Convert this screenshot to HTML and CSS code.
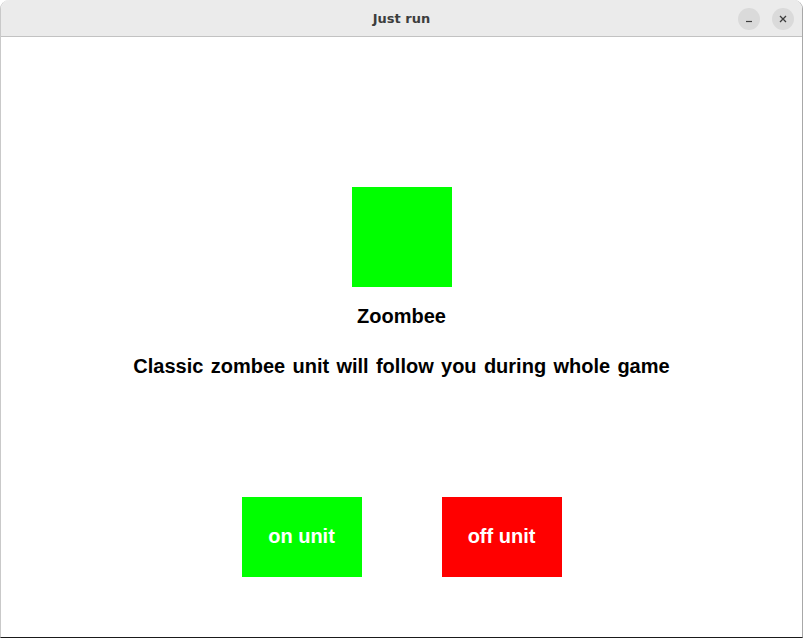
FILE: index.html
```html
<!DOCTYPE html>
<html>
<head>
<meta charset="utf-8">
<link rel="stylesheet" href="styles.css">
</head>
<body>
<div class="window">
  <div class="titlebar">
    <span class="title">Just run</span>
    <div class="controls">
      <span class="ctrl"><svg width="10" height="10" viewBox="0 0 10 10"><path d="M2 7.5h6" stroke="#3d3d3d" stroke-width="1.2"/></svg></span>
      <span class="ctrl"><svg width="10" height="10" viewBox="0 0 10 10"><path d="M2 2l6 6M8 2l-6 6" stroke="#3d3d3d" stroke-width="1.3"/></svg></span>
    </div>
  </div>
  <div class="content">
    <div class="unit-icon"></div>
    <div class="name">Zoombee</div>
    <div class="desc">Classic zombee unit will follow you during whole game</div>
    <div class="buttons">
      <div class="btn on">on unit</div>
      <div class="btn off">off unit</div>
    </div>
  </div>
  <div class="desk-strip"></div>
</div>
</body>
</html>
```
FILE: styles.css
```css
html, body {
  margin: 0;
  padding: 0;
  background: #ffffff;
}
.window {
  position: relative;
  width: 803px;
  height: 638px;
  box-sizing: border-box;
  border-left: 1px solid #c9c9c9;
  border-right: 1px solid #a8a8a8;
  border-bottom: 1px solid #1a1a1a;
  border-radius: 9px 9px 0 0;
  overflow: hidden;
  background: #ffffff;
  display: flex;
  flex-direction: column;
}
.titlebar {
  height: 36px;
  flex: none;
  background: #ebebeb;
  border-bottom: 1px solid #c2c2c2;
  display: flex;
  align-items: center;
  justify-content: center;
  position: relative;
}
.title {
  font-family: "DejaVu Sans", sans-serif;
  font-weight: bold;
  font-size: 13px;
  color: #3d3d3d;
  margin-top: 1px;
}
.controls {
  position: absolute;
  right: 8px;
  top: 8px;
  display: flex;
  gap: 12px;
}
.ctrl {
  width: 22px;
  height: 22px;
  border-radius: 50%;
  background: #dadada;
  display: flex;
  align-items: center;
  justify-content: center;
}
.content {
  flex: 1;
  display: flex;
  flex-direction: column;
  align-items: center;
  padding-top: 150px;
  font-family: "Liberation Sans", Arial, sans-serif;
  font-weight: bold;
  font-size: 20px;
  color: #000000;
}
.unit-icon {
  width: 100px;
  height: 100px;
  background: #00ff00;
}
.name {
  margin-top: 18px;
  line-height: 23px;
}
.desc {
  margin-top: 27px;
  line-height: 23px;
  word-spacing: 1.75px;
}
.buttons {
  margin-top: 119px;
  display: flex;
  gap: 80px;
}
.btn {
  width: 120px;
  height: 80px;
  box-sizing: border-box;
  padding-bottom: 2px;
  display: flex;
  align-items: center;
  justify-content: center;
  color: #ffffff;
}
.btn.on { background: #00ff00; }
.btn.off { background: #ff0000; }
.desk-strip {
  position: absolute;
  left: -1px;
  top: 497px;
  width: 1px;
  height: 140px;
  background: #1a1a1a;
}
```
